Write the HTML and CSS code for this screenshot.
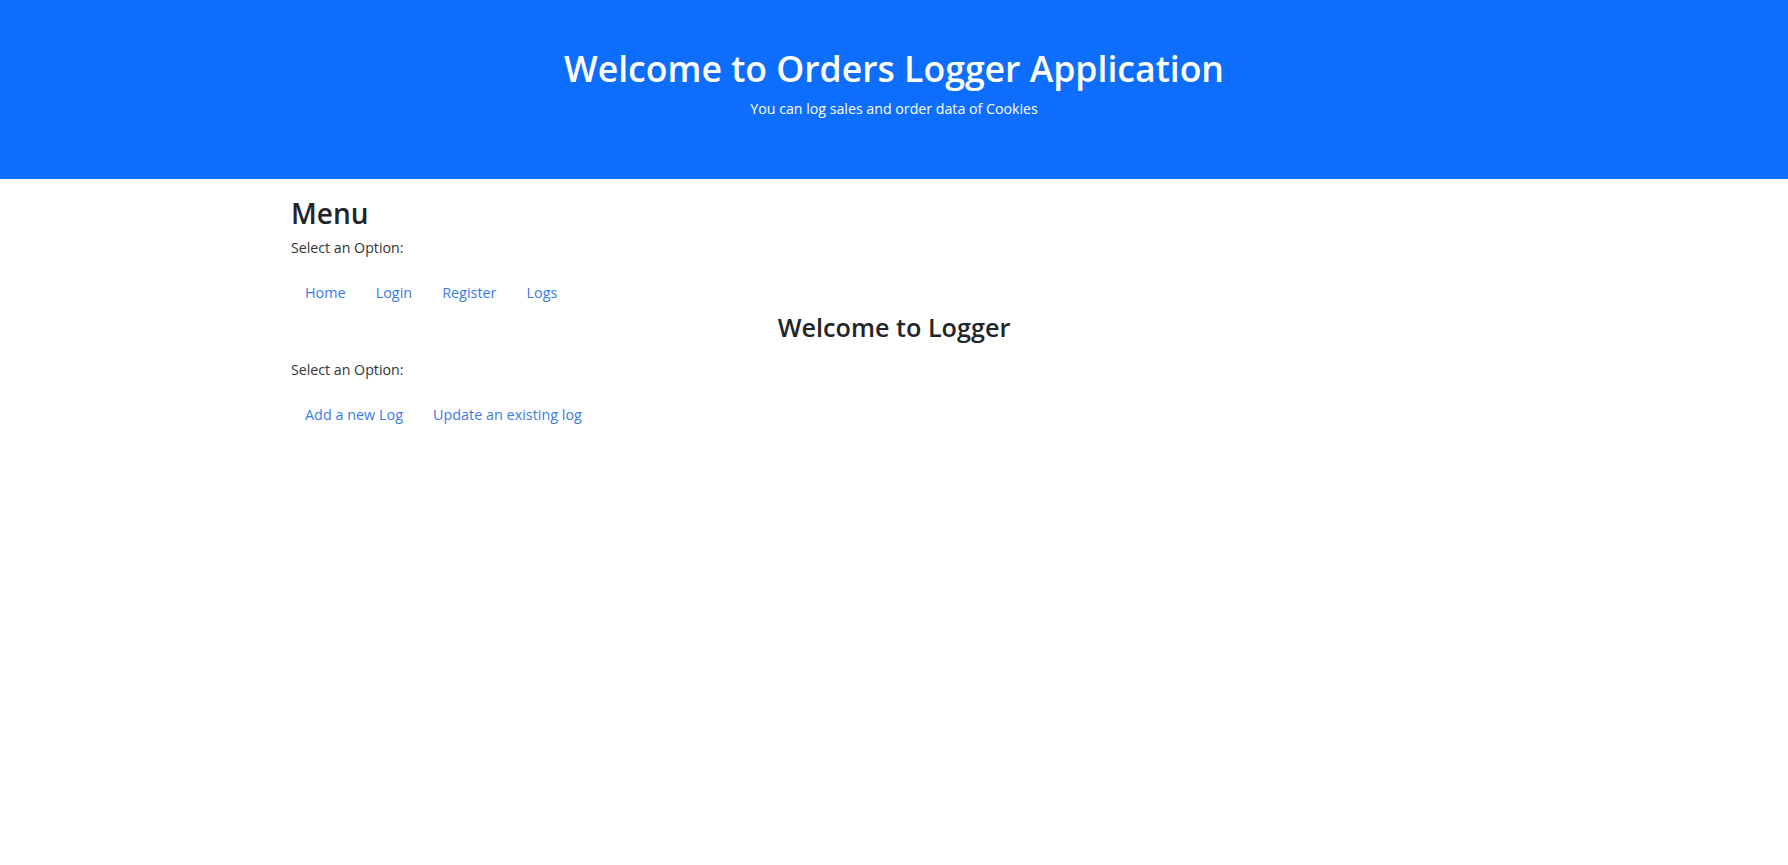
FILE: index.html
```html
<!DOCTYPE html>
<html lang="en">
<head>
<meta charset="utf-8">
<title>Orders Logger</title>
<link rel="stylesheet" href="styles.css">
</head>
<body>
<header class="hero">
  <h1 class="hero-title">Welcome to Orders Logger Application</h1>
  <p class="hero-sub">You can log sales and order data of Cookies</p>
</header>
<main class="container">
  <h2 class="menu-title">Menu</h2>
  <p class="hint">Select an Option:</p>
  <nav class="nav">
    <a class="nav-link" href="#">Home</a>
    <a class="nav-link" href="#">Login</a>
    <a class="nav-link" href="#">Register</a>
    <a class="nav-link" href="#">Logs</a>
  </nav>
  <h3 class="section-title">Welcome to Logger</h3>
  <p class="hint hint-2">Select an Option:</p>
  <nav class="nav">
    <a class="nav-link" href="#">Add a new Log</a>
    <a class="nav-link" href="#">Update an existing log</a>
  </nav>
</main>
</body>
</html>
```

FILE: styles.css
```css
* { box-sizing: border-box; }
html, body { margin: 0; padding: 0; }
body {
  font-family: "Open Sans", "Noto Sans", sans-serif;
  font-size: 14.2px;
  line-height: 1.5;
  color: #212529;
  background: #fff;
}
.hero {
  background: #0d6efd;
  color: #fff;
  text-align: center;
  height: 179px;
  padding-top: 47px;
}
.hero-title {
  margin: 0 0 9px;
  font-size: 35.6px;
  font-weight: 600;
  line-height: 42px;
}
.hero-sub {
  margin: 0;
  font-size: 14.2px;
  line-height: 21px;
}
.container {
  padding: 17px 291px 0;
}
.menu-title {
  margin: 0 0 7px;
  font-size: 28px;
  font-weight: 600;
  line-height: 34px;
}
.hint {
  margin: 0 0 17px;
  line-height: 21px;
  color: #333;
}
.nav {
  display: flex;
}
.nav-link {
  display: block;
  padding: 7px 15px;
  font-size: 14.4px;
  line-height: 21px;
  color: #3a7be8;
  text-decoration: none;
}
.nav-link:first-child { padding-left: 14px; }
.section-title {
  margin: 3px 0 17px;
  text-align: center;
  font-size: 25.2px;
  font-weight: 600;
  line-height: 29px;
}
.hint-2 { margin-bottom: 17px; }
```
